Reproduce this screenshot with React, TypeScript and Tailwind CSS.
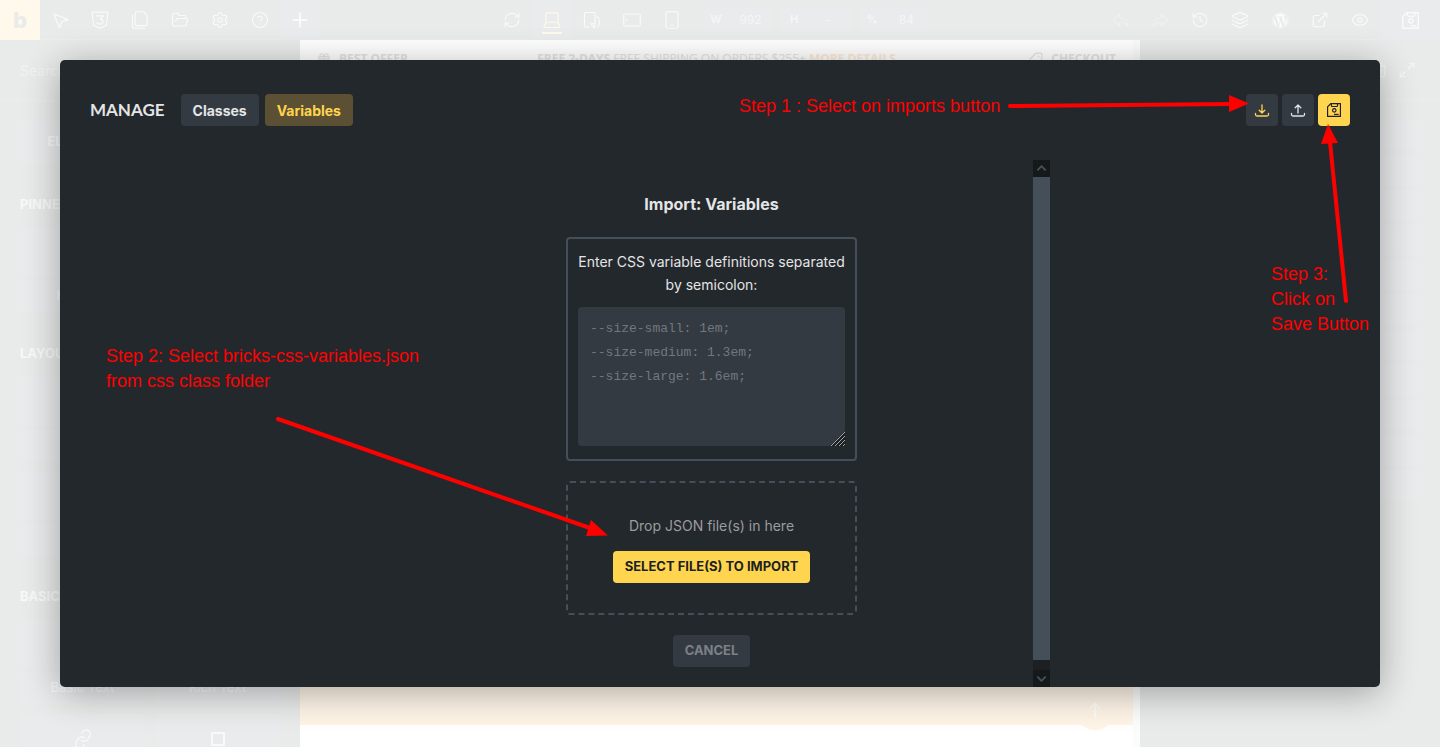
import { ReactNode } from 'react'
import {
  CircleHelp,
  ExternalLink,
  Eye,
  FolderOpen,
  Gift,
  History,
  Layers,
  Link,
  Maximize2,
  MousePointer2,
  Plus,
  RefreshCw,
  Settings,
  Tag,
  Trash2,
} from 'lucide-react'
import { FaWordpress } from 'react-icons/fa'

interface IconProps {
  className?: string
}

function Svg({ className = 'size-[18px]', children }: IconProps & { children: ReactNode }) {
  return (
    <svg
      className={className}
      viewBox="0 0 24 24"
      fill="none"
      stroke="currentColor"
      strokeWidth={1.5}
      strokeLinejoin="round"
      aria-hidden="true"
    >
      {children}
    </svg>
  )
}

function CssIcon() {
  return (
    <Svg>
      <path d="M1.500 1.500h21l-2 17.500-8.500 4-8.500-4z" />
      <path d="M7 6.500h9.500l-4 4.500c5 0 4.500 6.500-.5 6.500-2.500 0-4-1-4.500-2.500" />
    </Svg>
  )
}

function PagesIcon() {
  return (
    <Svg>
      <path d="M7.500 1h9l5 5v11.500c0 1.200-.8 2-2 2h-12c-1.200 0-2-.8-2-2V3c0-1.200.8-2 2-2z" />
      <path d="M2 4.500v15.500c0 1.700 1.300 3 3 3h13.500" />
    </Svg>
  )
}

function ArrowIcon({ flip = false }: { flip?: boolean }) {
  return (
    <Svg className={flip ? 'size-[17px] -scale-x-100' : 'size-[17px]'}>
      <path d="M13.500 3.500l9 8-9 8v-4.500c-5.500-.5-9 1-11.500 5.500 0-8 4-12.500 11.500-12.500z" />
    </Svg>
  )
}

function LaptopIcon() {
  return (
    <Svg>
      <path d="M4 15V4.500C4 3.200 4.800 2.500 6 2.500h12c1.200 0 2 .7 2 2V15zM4 15l-2.500 5c-.4 1 .1 2 1.500 2h18c1.400 0 1.900-1 1.500-2L20 15" />
    </Svg>
  )
}

function TabletRotateIcon() {
  return (
    <Svg>
      <path d="M9 21.500H3.500c-1 0-1.500-.5-1.500-1.500V3.500C2 2.500 2.500 2 3.500 2h11c1 0 1.500.5 1.500 1.500V11" />
      <path d="M18 7c5 3.500 5.500 10 1 15M16 11v6h-5.500M10.500 17l5 6v-6" />
    </Svg>
  )
}

function TabletIcon() {
  return (
    <Svg>
      <rect x="1" y="4" width="22" height="16" rx="2" />
      <path d="M5 10.500v3" />
    </Svg>
  )
}

function PhoneIcon() {
  return (
    <Svg>
      <rect x="4" y="1" width="16" height="22" rx="2" />
      <path d="M10.500 19h3" />
    </Svg>
  )
}

function SaveIcon({ className = 'size-[18px]' }: IconProps) {
  return (
    <svg className={className} viewBox="0 0 24 24" fill="none" stroke="currentColor" strokeWidth={2} aria-hidden="true">
      <path d="M1 6.500L6.500 1H23v22H1z" />
      <path d="M7.500 1.500v3c0 1 .5 1.500 1.500 1.500h7.500c1 0 1.500-.5 1.500-1.500v-3" />
      <circle cx="12.500" cy="12.500" r="3" />
      <path d="M12 19.500h8" />
    </svg>
  )
}

function TrayIcon({ up = false }: { up?: boolean }) {
  return (
    <svg
      className="size-4"
      viewBox="0 0 16 16"
      fill="none"
      stroke="currentColor"
      strokeWidth={1.3}
      strokeLinecap="round"
      strokeLinejoin="round"
      aria-hidden="true"
    >
      <path d="M1.500 11.500v1c0 1 .5 1.500 1.500 1.500h10c1 0 1.500-.5 1.500-1.500v-1" />
      {up ? <path d="M8 11V3M5.200 5.800L8 3l2.800 2.800" /> : <path d="M8 3v8M5.200 8.200L8 11l2.800-2.800" />}
    </svg>
  )
}

const icon = 'size-[18px]'

function ToolButton({ label, className = 'w-10', children }: { label: string; className?: string; children: ReactNode }) {
  return (
    <button type="button" aria-label={label} className={`flex h-10 shrink-0 items-center justify-center ${className}`}>
      {children}
    </button>
  )
}

function SizeField({ label, value }: { label: string; value: string }) {
  return (
    <label className="flex h-6 w-[68px] items-center rounded bg-[#eaebed] text-[#f5f6f6]">
      <span className="w-6 text-center text-[11px] font-bold">{label}</span>
      <input
        readOnly
        defaultValue={value}
        className="w-11 border-l border-[#e8ebe9] bg-transparent text-center text-[12px] outline-none"
      />
    </label>
  )
}

function Toolbar() {
  return (
    <header className="flex h-10 shrink-0 justify-between border-b border-[#eceeed] bg-[#e8ebe9] text-[#f9fafa]">
      <div className="flex">
        <ToolButton label="Bricks" className="w-10 bg-[#fff9ec] text-[22px] font-extrabold text-[#e8ebe9]">b</ToolButton>
        <ToolButton label="Select"><MousePointer2 className="size-[19px]" strokeWidth={1.5} /></ToolButton>
        <ToolButton label="CSS"><CssIcon /></ToolButton>
        <ToolButton label="Pages"><PagesIcon /></ToolButton>
        <ToolButton label="Templates"><FolderOpen className={icon} strokeWidth={1.5} /></ToolButton>
        <ToolButton label="Settings"><Settings className={icon} strokeWidth={1.5} /></ToolButton>
        <ToolButton label="Help"><CircleHelp className={icon} strokeWidth={1.5} /></ToolButton>
        <ToolButton label="Add element" className="w-10 bg-[#eaebed] text-white">
          <Plus className="size-6" strokeWidth={1.5} />
        </ToolButton>
      </div>

      <div className="flex items-center">
        <ToolButton label="Reload"><RefreshCw className={icon} strokeWidth={1.5} /></ToolButton>
        <ToolButton label="Desktop" className="w-10 bg-[#eaebed] text-[#fff9ec]">
          <span className="flex flex-col items-center gap-[3px] pt-[6px]">
            <LaptopIcon />
            <span className="h-0.5 w-5 bg-[#fff9ec]" />
          </span>
        </ToolButton>
        <ToolButton label="Tablet portrait"><TabletRotateIcon /></ToolButton>
        <ToolButton label="Mobile landscape"><TabletIcon /></ToolButton>
        <ToolButton label="Mobile portrait"><PhoneIcon /></ToolButton>
        <div className="ml-3 flex gap-[10px]">
          <SizeField label="W" value="992" />
          <SizeField label="H" value="-" />
          <SizeField label="%" value="84" />
        </div>
      </div>

      <div className="flex">
        <span className="flex text-[#eff1f0]">
          <ToolButton label="Undo"><ArrowIcon flip /></ToolButton>
          <ToolButton label="Redo"><ArrowIcon /></ToolButton>
        </span>
        <ToolButton label="History"><History className={icon} strokeWidth={1.5} /></ToolButton>
        <ToolButton label="Structure"><Layers className={icon} strokeWidth={1.5} /></ToolButton>
        <ToolButton label="WordPress"><FaWordpress className="size-[17px]" /></ToolButton>
        <ToolButton label="Open page"><ExternalLink className={icon} strokeWidth={1.5} /></ToolButton>
        <ToolButton label="Preview"><Eye className={icon} strokeWidth={1.5} /></ToolButton>
        <ToolButton label="Save" className="w-[60px] bg-[#eaebed]"><SaveIcon className="size-[17px]" /></ToolButton>
      </div>
    </header>
  )
}

interface Tile {
  label: string
  icon?: ReactNode
}

const groups: { title: string; tiles: Tile[] }[] = [
  { title: 'PINNED', tiles: [{ label: 'Heading' }, { label: 'Image' }] },
  { title: 'LAYOUT', tiles: [{ label: 'Section' }, { label: 'Container' }, { label: 'Block' }, { label: 'Div' }] },
  { title: 'BASIC', tiles: [{ label: 'Basic Text' }, { label: 'Rich Text' }] },
]

function ElementsPanel() {
  return (
    <aside className="w-[300px] shrink-0 overflow-hidden bg-[#e8ebe9] text-[#f8f9f9]">
      <div className="flex h-[61px] items-center border-b border-[#eceeed] px-5">
        <input
          aria-label="Search"
          placeholder="Search"
          className="w-full bg-transparent text-[14px] outline-none placeholder:text-[#f1f3f2]"
        />
      </div>
      <div className="px-5 pt-5 text-[13px]">
        <div className="grid grid-cols-2 gap-[10px] font-bold">
          <button type="button" className="h-[42px] rounded bg-[#eaebed]">ELEMENTS</button>
          <button type="button" className="h-[42px] rounded">GLOBAL</button>
        </div>
        {groups.map(({ title, tiles }) => (
          <section key={title}>
            <h2 className="mt-[29px] mb-3 text-[13px] leading-6 font-bold">{title}</h2>
            <div className="grid grid-cols-2 gap-[10px]">
              {tiles.map((tile) => (
                <button key={tile.label} type="button" className="flex h-[84px] flex-col rounded bg-[#eaebed] font-medium">
                  <span className="h-[51px] w-full border-b border-[#e7e9e9]" />
                  <span className="w-full leading-8">{tile.label}</span>
                </button>
              ))}
            </div>
          </section>
        ))}
        <div className="mt-[10px] grid grid-cols-2 gap-[10px]">
          <button type="button" aria-label="Text Link" className="flex h-[84px] justify-center rounded bg-[#eaebed] pt-[15px]">
            <Link className="size-5 -rotate-12" strokeWidth={1.5} />
          </button>
          <button type="button" aria-label="Button" className="flex h-[84px] justify-center rounded bg-[#eaebed] pt-[18px]">
            <span className="size-[14px] border-2 border-current" />
          </button>
        </div>
      </div>
    </aside>
  )
}

function Canvas() {
  return (
    <main className="flex min-w-0 flex-1 bg-[#fcfcfc] pr-[7px] font-['Open_Sans',sans-serif]">
      <div className="flex flex-1 flex-col justify-between bg-white">
        <div className="flex h-[38px] items-center px-[17px] text-[12px] text-[#e4e4e4]">
          <span className="flex w-32 items-center gap-2 font-bold">
            <Gift className="size-[14px]" />
            BEST OFFER
          </span>
          <p className="flex-1 text-center">
            <b>FREE 2-DAYS</b> FREE SHIPPING ON ORDERS $255+ <a href="#details" className="font-bold text-[#fdebd5]">MORE DETAILS</a>
          </p>
          <span className="flex w-32 items-center justify-end gap-2 font-bold">
            <Tag className="size-[14px] -scale-x-100" />
            CHECKOUT
          </span>
        </div>
        <div className="mb-[22px] flex h-[120px] items-end justify-end bg-[#fff5e7] pr-[18px]">
          <a
            href="#top"
            aria-label="Back to top"
            className="-mb-[5px] flex size-10 items-center justify-center rounded-full bg-[#fff5e7] text-white"
          >
            <Svg><path d="M12 21V4M5 10l7-7 7 7" strokeWidth={2} /></Svg>
          </a>
        </div>
      </div>
    </main>
  )
}

function StructurePanel() {
  return (
    <aside className="w-[300px] shrink-0 bg-[#e8ebe9] text-[#f5f6f6]">
      <div className="flex h-[60px] items-center justify-end gap-[10px] border-b border-[#eceeed] px-6">
        <button type="button" aria-label="Delete"><Trash2 className="size-4" strokeWidth={1.5} /></button>
        <button type="button" aria-label="Expand"><Maximize2 className={icon} strokeWidth={1.5} /></button>
      </div>
      <ul className="flex flex-col gap-[5px] px-5 pt-5">
        {Array.from({ length: 11 }, (_, i) => (
          <li key={i} className="h-[30px] rounded bg-[#eaebed]" />
        ))}
      </ul>
    </aside>
  )
}

function ImportForm() {
  return (
    <div className="flex flex-1 flex-col items-center overflow-hidden pt-8">
      <h3 className="text-[16px] leading-6 font-bold">Import: Variables</h3>

      <div className="mt-[21px] w-[291px] rounded border-2 border-[#454f59] px-[10px] pt-[11px] pb-[13px]">
        <label htmlFor="definitions" className="block text-center text-[14px] leading-[23px]">
          Enter CSS variable definitions separated by semicolon:
        </label>
        <div className="relative mt-[11px] flex">
          <textarea
            id="definitions"
            placeholder={'--size-small: 1em;\n--size-medium: 1.3em;\n--size-large: 1.6em;'}
            className="h-[139px] w-full resize-none rounded bg-[#343a42] px-3 py-[10px] font-['Liberation_Mono',monospace] text-[13px] leading-6 outline-none placeholder:text-[#72777d]"
          />
          {/* Resize grip */}
          <svg className="absolute right-0 bottom-0 size-[15px]" viewBox="0 0 15 15" aria-hidden="true">
            <path d="M0 15L15 0v15z" fill="#1c2023" />
            <path d="M1 15L15 1M5 15L15 5M9 15l6-6M13 15l2-2" stroke="#a5a8aa" strokeWidth={1} />
          </svg>
        </div>
      </div>

      <div className="mt-5 flex h-[134px] w-[291px] flex-col items-center justify-center gap-[13px] rounded border-2 border-dashed border-[#454f59]">
        <p className="text-[14px] leading-6 text-[#9b9c9f]">Drop JSON file(s) in here</p>
        <button type="button" className="h-8 rounded bg-[#ffd54f] px-3 text-[13px] font-bold text-[#1d1f22]">
          SELECT FILE(S) TO IMPORT
        </button>
      </div>

      <button type="button" className="mt-5 h-8 rounded bg-[#343a42] px-3 text-[13px] font-bold text-[#7d8184]">
        CANCEL
      </button>
    </div>
  )
}

// Scroll track beside the form, with its two arrow buttons
function ScrollTrack() {
  return (
    <div className="flex w-[17px] flex-col bg-[#1c2023] text-[#4c5154]">
      <button type="button" aria-label="Scroll up" className="flex h-[17px] items-center justify-center bg-[#15191b]">
        <Svg className="size-[11px]"><path d="M3 16l9-9 9 9" strokeWidth={4} /></Svg>
      </button>
      <div className="mb-[10px] flex-1 bg-[#454f59]" />
      <button type="button" aria-label="Scroll down" className="flex h-[17px] items-center justify-center bg-[#15191b]">
        <Svg className="size-[11px]"><path d="M3 8l9 9 9-9" strokeWidth={4} /></Svg>
      </button>
    </div>
  )
}

function ManageDialog() {
  return (
    <div
      role="dialog"
      aria-label="Manage"
      className="absolute inset-[60px] flex flex-col rounded-[5px] bg-[#23282c] text-[#e3e5e6] shadow-[0_6px_36px_rgba(0,0,0,0.32)]"
    >
      <div className="flex h-[100px] shrink-0 items-center justify-between px-[30px]">
        <div className="flex items-center gap-[6px]">
          <h1 className="mr-[10px] font-['Lato',sans-serif] text-[17px] font-bold">MANAGE</h1>
          <button type="button" className="h-8 rounded bg-[#343a42] px-3 text-[14px] font-bold">Classes</button>
          <button type="button" className="h-8 rounded bg-[#5b5033] px-3 text-[14px] font-bold text-[#ffd54f]">Variables</button>
        </div>
        <div className="flex gap-1">
          <button type="button" aria-label="Import" className="flex size-8 items-center justify-center rounded bg-[#343a42] text-[#ffd54f]">
            <TrayIcon />
          </button>
          <button type="button" aria-label="Export" className="flex size-8 items-center justify-center rounded bg-[#343a42]">
            <TrayIcon up />
          </button>
          <button type="button" aria-label="Save" className="flex size-8 items-center justify-center rounded bg-[#ffd54f] text-[#1d1f22]">
            <SaveIcon className="size-[14px]" />
          </button>
        </div>
      </div>
      <div className="mx-auto flex min-h-0 w-1/2 flex-1">
        <ImportForm />
        <ScrollTrack />
      </div>
    </div>
  )
}

// Step notes and arrows pinned over the whole screen
function Annotations() {
  return (
    <div className="pointer-events-none absolute inset-0 font-['Liberation_Sans',Arial,sans-serif] text-[18px] leading-[25px] whitespace-nowrap text-[#ff0000]">
      <svg className="absolute top-0 left-0 h-[747px] w-[1440px]" viewBox="0 0 1440 747" stroke="#ff0000" strokeWidth={4} strokeLinecap="round" aria-hidden="true">
        <path d="M1010 106L1232 104M278 419L590 528M1346 301L1330 142" />
        <path d="M1229 95l20 8.500-20 8.500zM591 520l17 15.500-22 .5zM1328 124l-7 20 17-1z" fill="#ff0000" stroke="none" />
      </svg>
      <p className="absolute top-[94px] left-[739px]">Step 1 : Select on imports button</p>
      <p className="absolute top-[344px] left-[106px]">
        Step 2: Select bricks-css-variables.json
        <br />
        from css class folder
      </p>
      <p className="absolute top-[262px] left-[1271px]">
        Step 3:
        <br />
        Click on
        <br />
        Save Button
      </p>
    </div>
  )
}

export default function App() {
  return (
    <div className="relative flex h-screen flex-col overflow-hidden font-['Inter',sans-serif]">
      <Toolbar />
      <div className="flex min-h-0 flex-1">
        <ElementsPanel />
        <Canvas />
        <StructurePanel />
      </div>
      <ManageDialog />
      <Annotations />
    </div>
  )
}
